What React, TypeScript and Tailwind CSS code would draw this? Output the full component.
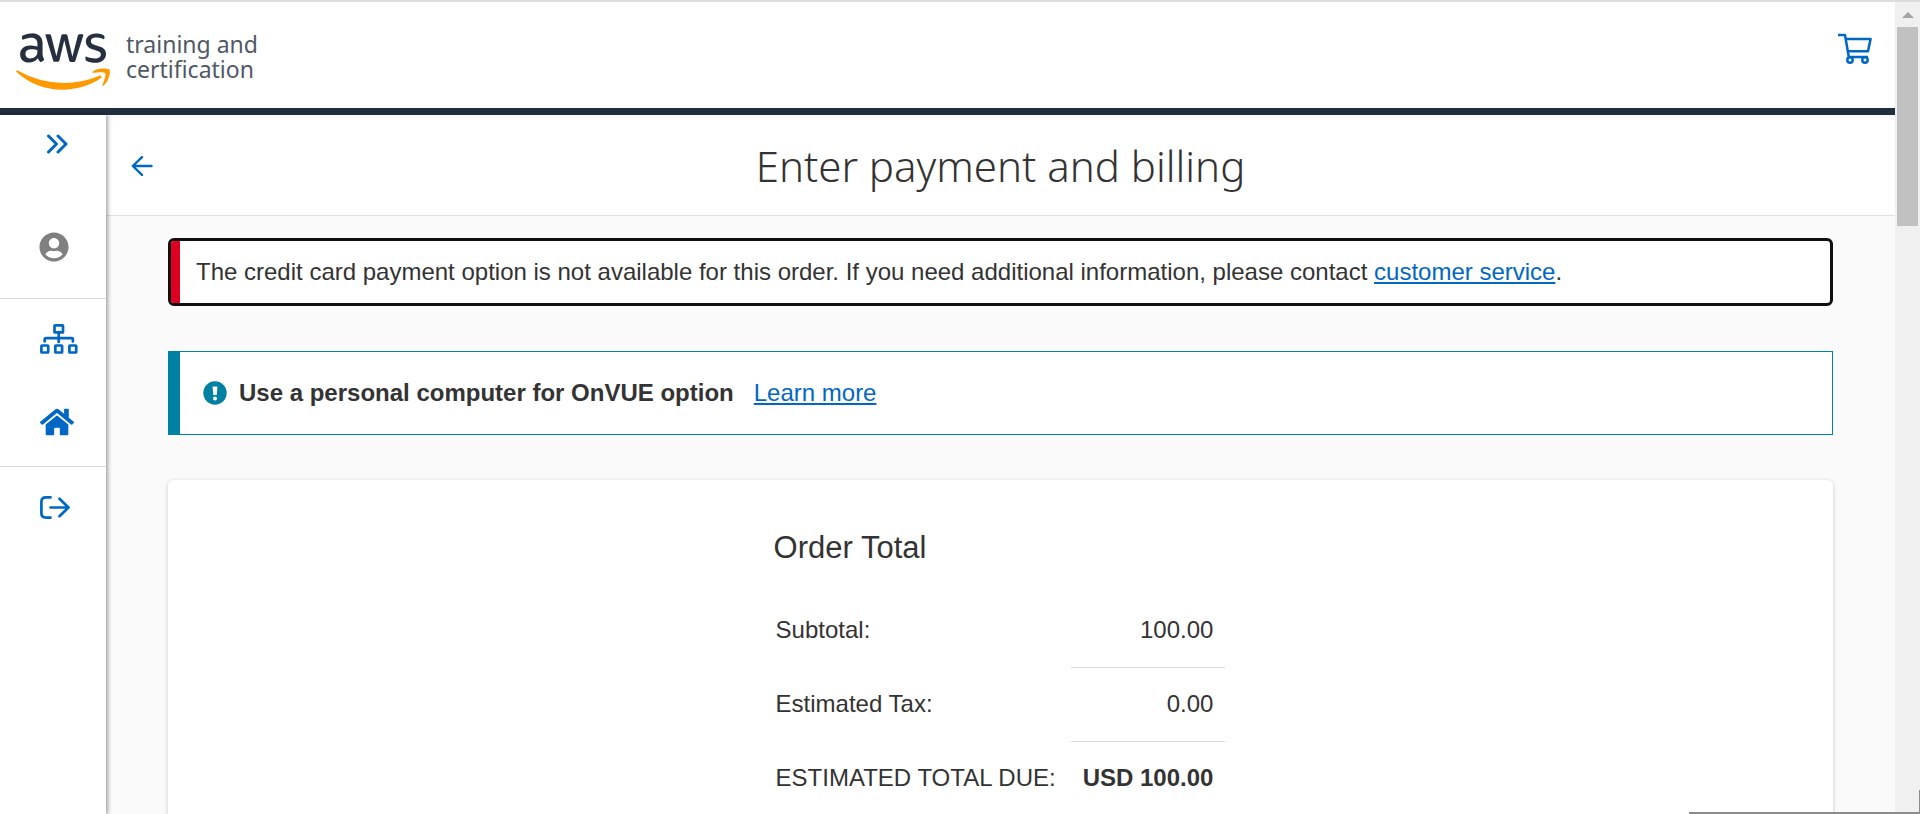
import React from "react";
import { FaAws, FaHome, FaUserCircle } from "react-icons/fa";

const LINE_ITEMS = [
  { label: "Subtotal:", amount: "100.00" },
  { label: "Estimated Tax:", amount: "0.00" },
];

function CartIcon() {
  return (
    <svg viewBox="0 0 34 31" className="h-[31px] w-[34px]" fill="none" stroke="currentColor" strokeWidth="2.500" strokeLinejoin="round" aria-hidden="true">
      <path d="M0 2h7l3.800 22H30" />
      <path d="M7.500 6H32.600l-2.600 12.300H9.800" />
      <circle cx="12" cy="27" r="2.700" />
      <circle cx="27" cy="27" r="2.700" />
    </svg>
  );
}

function ChevronsIcon() {
  return (
    <svg viewBox="0 0 22 20" className="h-5 w-[22px]" fill="none" stroke="currentColor" strokeWidth="3" strokeLinecap="round" strokeLinejoin="round" aria-hidden="true">
      <path d="M2.500 2l8 8-8 8M12 2l8 8-8 8" />
    </svg>
  );
}

function BackIcon() {
  return (
    <svg viewBox="0 0 22 20" className="h-5 w-[22px]" fill="none" stroke="currentColor" strokeWidth="2.400" strokeLinecap="round" strokeLinejoin="round" aria-hidden="true">
      <path d="M11 1.200L1.800 10l9.200 8.800M2 10h18.500" />
    </svg>
  );
}

function SitemapIcon() {
  return (
    <svg viewBox="0 0 38 30" className="h-[30px] w-[38px]" fill="none" stroke="currentColor" strokeWidth="2.700" strokeLinecap="round" strokeLinejoin="round" aria-hidden="true">
      <rect x="14.500" y="1.400" width="8.500" height="7" rx="0.500" />
      <rect x="1.400" y="21.500" width="6.800" height="7" rx="0.500" />
      <rect x="15.300" y="21.500" width="6.800" height="7" rx="0.500" />
      <rect x="29.400" y="21.500" width="6.800" height="7" rx="0.500" />
      <path d="M18.700 8v10M4.700 17.500v-2q0-1.300 1.300-1.300h25.600q1.300 0 1.300 1.300v2" />
    </svg>
  );
}

function SignOutIcon() {
  return (
    <svg viewBox="0 0 30 23" className="h-[23px] w-[30px]" fill="none" stroke="currentColor" strokeWidth="2.700" strokeLinecap="round" strokeLinejoin="round" aria-hidden="true">
      <path d="M10.500 1.400H6Q1.400 1.400 1.400 6v11q0 4.600 4.600 4.600h4.500" />
      <path d="M10.500 11.500H28M19.500 2.800l9 8.700-9 8.700" />
    </svg>
  );
}

function AlertIcon() {
  return (
    <svg viewBox="0 0 24 24" className="size-6 text-[#0080a3]" aria-hidden="true">
      <circle cx="12" cy="12" r="11.700" fill="currentColor" />
      <path d="M9.600 5.500h4.800l-.6 8.500h-3.600z" fill="#fff" />
      <circle cx="12" cy="17.500" r="2" fill="#fff" />
    </svg>
  );
}

function Logo() {
  return (
    <a href="#home" aria-label="aws training and certification" className="flex items-start gap-4">
      <svg width="0" height="0" className="absolute" aria-hidden="true">
        <linearGradient id="logo-tone" gradientUnits="userSpaceOnUse" x1="0" y1="0" x2="0" y2="512">
          <stop offset="0.570" stopColor="#252f3e" />
          <stop offset="0.570" stopColor="#ff9900" />
        </linearGradient>
      </svg>
      <FaAws fill="url(#logo-tone)" className="h-[75px] w-[94px]" />
      <span className="mt-2 font-['Noto_Sans',sans-serif] text-[23px] leading-[25px] text-[#4f5866]">
        training and
        <br />
        certification
      </span>
    </a>
  );
}

function Header() {
  return (
    <header className="flex h-[113px] shrink-0 items-start justify-between border-b-[7px] border-[#202d3f] bg-white pt-[22px] pr-[23px] pl-4">
      <Logo />
      <button type="button" aria-label="Shopping cart" className="mt-[9px] text-[#0067c5]">
        <CartIcon />
      </button>
    </header>
  );
}

function Sidebar() {
  return (
    <nav aria-label="Main" className="relative w-[106px] shrink-0 bg-white text-[#0067c5] shadow-[2px_0_4px_rgba(0,0,0,0.35)]">
      <div className="flex h-[184px] flex-col items-start justify-between border-b border-[#d9d9d9] pt-[19px] pb-9 pl-[39px]">
        <button type="button" aria-label="Expand menu" className="ml-[7px]">
          <ChevronsIcon />
        </button>
        <button type="button" aria-label="Account" className="text-[#808080]">
          <FaUserCircle className="size-[30px]" />
        </button>
      </div>
      <div className="flex h-[168px] flex-col items-start justify-between border-b border-[#d9d9d9] pt-[25px] pb-[27px] pl-10">
        <a href="#programs" aria-label="Programs">
          <SitemapIcon />
        </a>
        <a href="#dashboard" aria-label="Home">
          <FaHome className="size-[34px]" />
        </a>
      </div>
      <div className="pt-7 pl-10">
        <button type="button" aria-label="Sign out">
          <SignOutIcon />
        </button>
      </div>
    </nav>
  );
}

function OrderTotal() {
  return (
    <section className="mt-[45px] flex shrink-0 flex-col items-center rounded-md bg-white pt-12 pr-[2px] pb-16 shadow-[0_1px_4px_rgba(0,0,0,0.2)]">
      <div>
        <h2 className="text-[31px] leading-10">Order Total</h2>
        <table className="mt-[25px]">
          <tbody>
            {LINE_ITEMS.map((item) => (
              <tr key={item.label} className="h-[74px]">
                <th scope="row" className="pr-[15px] pl-[2px] text-left font-normal">{item.label}</th>
                <td className="border-b border-[#d9d9d9] px-3 text-right">{item.amount}</td>
              </tr>
            ))}
            <tr className="h-[74px]">
              <th scope="row" className="pr-[15px] pl-[2px] text-left font-normal">ESTIMATED TOTAL DUE:</th>
              <td className="px-3 text-right font-bold">USD 100.00</td>
            </tr>
          </tbody>
        </table>
      </div>
    </section>
  );
}

function ScrollRail() {
  return (
    <div aria-hidden="true" className="flex w-[25px] shrink-0 flex-col items-center bg-[#f0f0f0] pt-[10px]">
      <div className="h-0 w-0 border-x-[6px] border-b-[6px] border-x-transparent border-b-[#a3a3a3]" />
      <div className="mt-[9px] h-[199px] w-[21px] bg-[#c1c1c1]" />
    </div>
  );
}

export default function App() {
  return (
    <div className="flex h-screen flex-col overflow-hidden border-t-2 border-[#dcdcdc] bg-[#fafafa] font-['Liberation_Sans',Arial,sans-serif] text-[24px] leading-8 text-[#333333]">
      <div className="flex min-h-0 grow">
        <div className="flex min-w-0 grow flex-col">
          <Header />
          <div className="flex min-h-0 grow">
            <Sidebar />
            <main className="flex min-w-0 grow flex-col pt-1">
              <div className="grid h-[97px] shrink-0 grid-cols-[1fr_auto_1fr] items-center border-b border-[#e1e1e1] bg-white px-[25px]">
                <button type="button" aria-label="Back" className="mb-[2px] justify-self-start text-[#0067c5]">
                  <BackIcon />
                </button>
                <h1 className="mb-[2px] font-['Noto_Sans',sans-serif] text-[42px] leading-[50px] font-light">Enter payment and billing</h1>
              </div>
              <div className="flex min-h-0 grow flex-col px-[62px] pt-[22px]">
                <div role="alert" className="flex shrink-0 overflow-hidden rounded-md border-[3px] border-[#101010] bg-white">
                  <div className="w-[9px] bg-[#dd0020]" />
                  <p className="py-[15px] pl-4">
                    The credit card payment option is not available for this order. If you need additional information, please contact{" "}
                    <a href="#support" className="text-[#0067c5] underline decoration-2 underline-offset-2">customer service</a>.
                  </p>
                </div>
                <div className="mt-[45px] flex h-[84px] shrink-0 items-center border border-l-[12px] border-[#0080a3] bg-white pl-[23px]">
                  <AlertIcon />
                  <strong className="ml-3">Use a personal computer for OnVUE option</strong>
                  <a href="#onvue" className="ml-5 text-[#0067c5] underline decoration-2 underline-offset-2">Learn more</a>
                </div>
                <OrderTotal />
              </div>
            </main>
          </div>
        </div>
        <ScrollRail />
      </div>
      <div aria-hidden="true" className="absolute right-0 bottom-0 h-[2px] w-[231px] bg-[#8c8c8c]" />
      <div aria-hidden="true" className="absolute right-0 bottom-0 h-6 w-px bg-[#8c8c8c]" />
    </div>
  );
}
